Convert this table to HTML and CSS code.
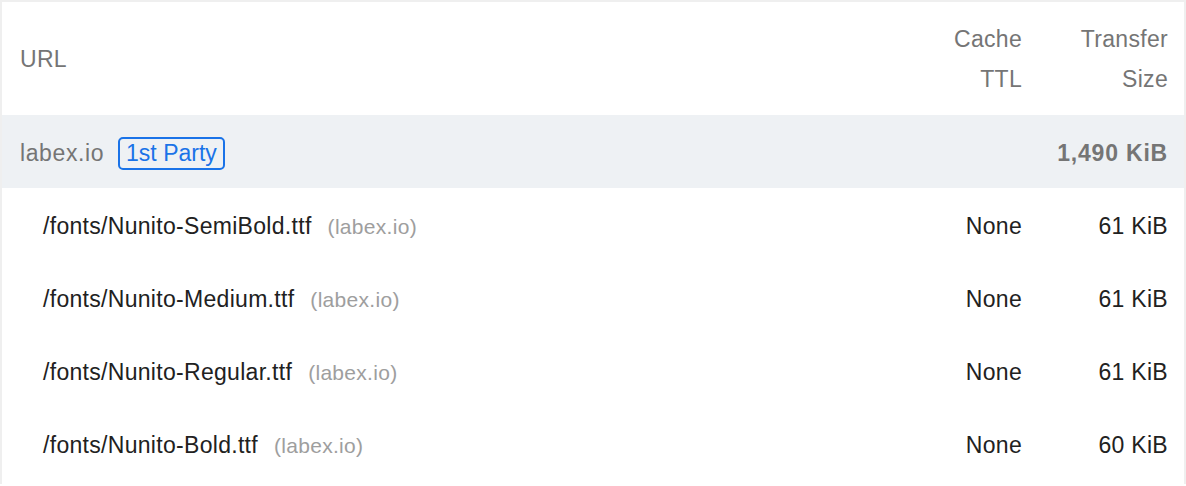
FILE: index.html
```html
<!DOCTYPE html>
<html>
<head>
<meta charset="utf-8">
<link rel="stylesheet" href="styles.css">
</head>
<body>
<div class="table">
  <div class="row head">
    <div class="c-url">URL</div>
    <div class="c-ttl">Cache<br>TTL</div>
    <div class="c-size">Transfer<br>Size</div>
  </div>
  <div class="row group">
    <div class="c-url"><span class="entity">labex.io</span><span class="badge">1st Party</span></div>
    <div class="c-ttl"></div>
    <div class="c-size total">1,490 KiB</div>
  </div>
  <div class="row item">
    <div class="c-url sub"><span class="path">/fonts/Nunito-SemiBold.ttf</span><span class="host">(labex.io)</span></div>
    <div class="c-ttl">None</div>
    <div class="c-size">61 KiB</div>
  </div>
  <div class="row item">
    <div class="c-url sub"><span class="path">/fonts/Nunito-Medium.ttf</span><span class="host">(labex.io)</span></div>
    <div class="c-ttl">None</div>
    <div class="c-size">61 KiB</div>
  </div>
  <div class="row item">
    <div class="c-url sub"><span class="path">/fonts/Nunito-Regular.ttf</span><span class="host">(labex.io)</span></div>
    <div class="c-ttl">None</div>
    <div class="c-size">61 KiB</div>
  </div>
  <div class="row item">
    <div class="c-url sub"><span class="path">/fonts/Nunito-Bold.ttf</span><span class="host">(labex.io)</span></div>
    <div class="c-ttl">None</div>
    <div class="c-size">60 KiB</div>
  </div>
</div>
</body>
</html>
```
FILE: styles.css
```css
html, body {
  margin: 0;
  padding: 0;
  background: #ffffff;
}
body {
  font-family: "Liberation Sans", Arial, sans-serif;
  font-size: 23px;
  letter-spacing: 0.3px;
  color: #212121;
}
.table {
  border: 2px solid #efefef;
  border-bottom: none;
  height: 484px;
  box-sizing: border-box;
  overflow: hidden;
}
.row {
  display: flex;
  align-items: center;
  box-sizing: border-box;
}
.c-url {
  flex: 1;
  padding-left: 18px;
  display: flex;
  align-items: center;
}
.c-ttl {
  width: 120px;
  padding-right: 17px;
  text-align: right;
  box-sizing: border-box;
  flex: none;
}
.c-size {
  width: 145px;
  padding-right: 16px;
  text-align: right;
  box-sizing: border-box;
  flex: none;
}
.head {
  height: 113px;
  color: #757575;
  line-height: 40px;
}
.group {
  height: 73px;
  padding-top: 4px;
  background: #eef1f4;
  color: #757575;
}
.entity {
  margin-right: 14px;
  letter-spacing: 0.6px;
}
.badge {
  color: #1a73e8;
  border: 2px solid #1a73e8;
  border-radius: 5px;
  padding: 0 6px;
  height: 29px;
  line-height: 29px;
  letter-spacing: 0;
  display: inline-block;
}
.total {
  font-weight: bold;
  letter-spacing: 0.8px;
}
.item {
  height: 73px;
  padding-top: 4px;
}
.sub {
  padding-left: 41px;
}
.host {
  color: #9e9e9e;
  font-size: 21px;
  margin-left: 16px;
}
```
